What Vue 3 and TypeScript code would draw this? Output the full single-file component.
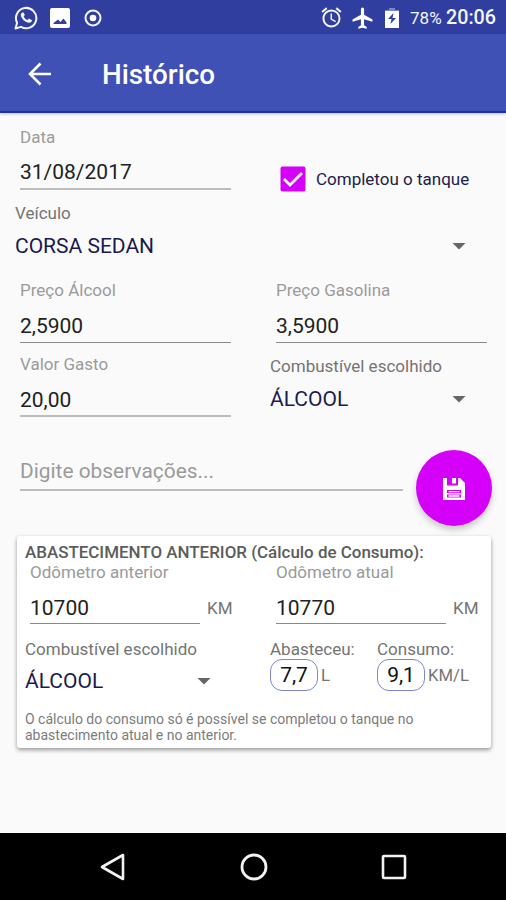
<script setup lang="ts">
interface PriceField {
  label: string
  value: string
}

const prices: PriceField[] = [
  { label: 'Preço Álcool', value: '2,5900' },
  { label: 'Preço Gasolina', value: '3,5900' },
]

const odometers: PriceField[] = [
  { label: 'Odômetro anterior', value: '10700' },
  { label: 'Odômetro atual', value: '10770' },
]
</script>

<template>
  <div class="screen">
    <header class="status">
      <div class="status-left">
        <svg class="i-whats" viewBox="0 0 24 24" width="24" height="24">
          <path d="M1.5 22.5l1.6-5.7A10.2 10.2 0 1 1 7 20.9z" fill="none" stroke="#f4f5ff" stroke-width="2" stroke-linejoin="round" />
          <path d="M8.3 6.4c-.9.5-1.6 1.5-1.4 2.9.5 3.8 4.7 7.6 8.3 7.5 1.6-.1 2.8-1.1 2.8-2.6l-3-1.6-1.5 1.5c-1.8-.8-3-2-3.8-3.7l1.1-1.3-1.2-2.7z" fill="#f4f5ff" />
        </svg>
        <svg class="i-pic" viewBox="0 0 20 20" width="20" height="20">
          <path fill-rule="evenodd" d="M2 0h16a2 2 0 0 1 2 2v16a2 2 0 0 1-2 2H2a2 2 0 0 1-2-2V2a2 2 0 0 1 2-2zM3.5 16h13v-1.500l-3-4-3 3.500-2.500-2.500-4.500 3.500z" fill="#fff" />
        </svg>
        <svg class="i-dot" viewBox="0 0 18 18" width="18" height="18">
          <circle cx="9" cy="9" r="7.500" fill="none" stroke="#f4f5ff" stroke-width="2" />
          <circle cx="9" cy="9" r="3.300" fill="#fff" />
        </svg>
      </div>
      <div class="status-right">
        <svg class="i-alarm" viewBox="1.500 1.500 21 21" width="21" height="21">
          <path d="M22 5.720l-4.600-3.860-1.290 1.530 4.600 3.860L22 5.720zM7.880 3.390L6.600 1.860 2 5.710l1.290 1.530 4.590-3.850zM12.500 8H11v6l4.750 2.850.75-1.230-4-2.370V8zM12 4c-4.970 0-9 4.030-9 9s4.020 9 9 9a9 9 0 0 0 0-18zm0 16c-3.870 0-7-3.130-7-7s3.130-7 7-7 7 3.130 7 7-3.130 7-7 7z" fill="#f4f5ff" />
        </svg>
        <svg class="i-plane" viewBox="2 1.500 20 21" width="21" height="22">
          <path d="M21.500 15.500v-2L13.500 9V3.500a1.500 1.500 0 0 0-3 0V9l-8 4.500v2l8-2.200V19l-2.500 1.700v1.600l4-1 4 1v-1.600L13.500 19v-5.700z" fill="#fff" />
        </svg>
        <svg class="i-batt" viewBox="0 0 14 20" width="14" height="20">
          <path d="M4 0h6v2h4v2H0V2h4z" fill="#7986cb" />
          <path fill-rule="evenodd" d="M0 3h14v17H0zM8.500 5L3 11h3.500l-1 5L11 10H7.500z" fill="#fff" />
        </svg>
        <span class="percent">78%</span>
        <span class="clock">20:06</span>
      </div>
    </header>

    <div class="appbar">
      <svg class="back" viewBox="0 0 24 24" width="24" height="24">
        <path d="M23 12H2.500M12.500 1.500L2 12l10.500 10.500" fill="none" stroke="#fff" stroke-width="2.600" />
      </svg>
      <h1>Histórico</h1>
    </div>

    <main>
      <div class="row first">
        <div class="field soft">
          <label>Data</label>
          <div class="value date">31/08/2017</div>
        </div>
        <div class="check">
          <svg viewBox="0 0 26 26" width="26" height="26">
            <rect x=".5" y=".5" width="25" height="25" rx="2" fill="#d500f9" />
            <path d="M4 13l6 6L22 7" fill="none" stroke="#fff" stroke-width="2.800" />
          </svg>
          <span>Completou o tanque</span>
        </div>
      </div>

      <div class="picker vehicle">
        <label>Veículo</label>
        <div class="choice"><span>CORSA SEDAN</span><i class="arrow"></i></div>
      </div>

      <div class="row prices">
        <div v-for="p in prices" :key="p.label" class="field">
          <label>{{ p.label }}</label>
          <div class="value">{{ p.value }}</div>
        </div>
      </div>

      <div class="row spent">
        <div class="field soft">
          <label>Valor Gasto</label>
          <div class="value">20,00</div>
        </div>
        <div class="picker fuel">
          <label>Combustível escolhido</label>
          <div class="choice"><span>ÁLCOOL</span><i class="arrow"></i></div>
        </div>
      </div>

      <div class="notes">
        <div class="hint">Digite observações...</div>
        <button class="fab" aria-label="Salvar">
          <svg viewBox="0 0 22 22" width="22" height="22">
            <path fill-rule="evenodd" d="M0 0h17l5 5v17H0zM4 0v7.500h11V0h-2v5.500H9V0zM4 12v7.500h14V12z" fill="#fff" />
            <path d="M5.500 13.700h11M5.500 18h11M4 15.900h14" stroke="#fff" stroke-width="1.300" />
          </svg>
        </button>
      </div>

      <section class="card">
        <h2>ABASTECIMENTO ANTERIOR (Cálculo de Consumo):</h2>
        <div class="odos">
          <div v-for="o in odometers" :key="o.label" class="odo">
            <div class="field">
              <label>{{ o.label }}</label>
              <div class="value">{{ o.value }}</div>
            </div>
            <span class="km">KM</span>
          </div>
        </div>
        <div class="results">
          <div class="picker">
            <label>Combustível escolhido</label>
            <div class="choice"><span>ÁLCOOL</span><i class="arrow"></i></div>
          </div>
          <div class="result">
            <label>Abasteceu:</label>
            <div class="measure"><b>7,7</b><span>L</span></div>
          </div>
          <div class="result">
            <label>Consumo:</label>
            <div class="measure"><b>9,1</b><span>KM/L</span></div>
          </div>
        </div>
        <p>O cálculo do consumo só é possível se completou o tanque no<br />abastecimento atual e no anterior.</p>
      </section>
    </main>

    <nav>
      <svg viewBox="0 0 28 28" width="28" height="28"><path d="M24 2v24L3 14z" fill="none" stroke="#f2f2f2" stroke-width="2.600" stroke-linejoin="round" /></svg>
      <svg viewBox="0 0 28 28" width="28" height="28"><circle cx="14" cy="14" r="12" fill="none" stroke="#f2f2f2" stroke-width="2.800" /></svg>
      <svg viewBox="0 0 28 28" width="28" height="28"><rect x="3" y="3" width="22" height="22" rx="1" fill="none" stroke="#f2f2f2" stroke-width="2.600" /></svg>
    </nav>
  </div>
</template>

<style>
body {
  margin: 0;
}
</style>

<style scoped>
* {
  box-sizing: border-box;
}
.screen {
  width: 506px;
  height: 900px;
  display: flex;
  flex-direction: column;
  background: #fafafa;
  font-family: Roboto, sans-serif;
  color: #212121;
  overflow: hidden;
  white-space: nowrap;
}
svg {
  display: block;
  flex: none;
}
.status {
  height: 34px;
  flex: none;
  background: #303f9f;
  display: flex;
  justify-content: space-between;
  color: #f4f5ff;
}
.status-left,
.status-right {
  display: flex;
  align-items: center;
  height: 35px;
}
.status-left {
  padding-left: 14px;
}
.i-pic {
  margin-left: 12px;
}
.i-dot {
  margin-left: 14px;
}
.status-right {
  padding-right: 10px;
}
.i-plane {
  margin-left: 10px;
}
.i-batt {
  margin-left: 12px;
}
.percent {
  margin-left: 11px;
  width: 36px;
  font-size: 17px;
}
.clock {
  font-size: 19.700px;
  font-weight: 500;
}
.appbar {
  height: 79px;
  flex: none;
  background: #3f51b5;
  border-bottom: 2px solid #1d32a5;
  box-shadow: 0 1px 3px rgba(0, 0, 0, 0.25);
  display: flex;
  align-items: center;
  padding: 2px 0 0 28px;
}
h1 {
  margin: 2px 0 0 50px;
  color: #fff;
  font-size: 27.800px;
  font-weight: 500;
}
main {
  flex: 1;
  padding-top: 13px;
}
.row {
  display: grid;
  grid-template-columns: 211px 211px;
  column-gap: 45px;
  padding-left: 20px;
}
.first {
  height: 64px;
}
label {
  display: block;
  line-height: 22px;
  font-size: 17px;
}
.field label {
  color: #9a9a9a;
}
.value {
  margin-top: 8px;
  height: 34px;
  line-height: 34px;
  font-size: 21px;
  border-bottom: 1px solid #8a8a8a;
}
.soft .value {
  border-bottom: 2px solid #bcbcbc;
}
.first .value {
  line-height: 32px;
}
.check {
  display: flex;
  align-items: center;
  gap: 10px;
  margin-left: 4px;
  padding-top: 40px;
  font-size: 17px;
  color: #20204a;
}
.picker label {
  color: #747474;
}
.choice {
  display: flex;
  align-items: center;
  justify-content: space-between;
  height: 34px;
  font-size: 21px;
  color: #1a1a50;
}
.arrow {
  width: 14px;
  height: 7px;
  background: #666;
  clip-path: polygon(0 0, 100% 0, 50% 100%);
}
.vehicle {
  padding-top: 12px;
  margin: 0 40px 0 15px;
}
.vehicle .choice,
.fuel .choice {
  margin-top: 5px;
}
.prices {
  padding-top: 16px;
}
.spent {
  padding-top: 10px;
}
.fuel {
  padding-top: 2px;
  margin: 0 21px 0 -6px;
}
.results .choice {
  margin-top: 4px;
}
.notes {
  height: 119px;
  display: flex;
  align-items: flex-start;
  padding: 33px 0 0 20px;
  gap: 13px;
}
.hint {
  width: 383px;
  height: 41px;
  line-height: 43px;
  color: #9a9a9a;
  border-bottom: 2px solid #bcbcbc;
  font-size: 20.900px;
}
.fab {
  width: 76px;
  height: 76px;
  border: 0;
  border-radius: 50%;
  background: #d500f9;
  box-shadow: 0 4px 6px rgba(0, 0, 0, 0.2);
  display: flex;
  align-items: center;
  justify-content: center;
  padding: 1px 0 0;
}
.card {
  margin: 0 15px 0 17px;
  height: 212px;
  border-radius: 3px;
  background: #fff;
  box-shadow: 0 2px 4px rgba(0, 0, 0, 0.4);
  padding: 6px 0 0 8px;
}
h2 {
  margin: 0;
  font-size: 16.950px;
  line-height: 20px;
  font-weight: 500;
  color: #5c5c5c;
}
.odos {
  display: grid;
  grid-template-columns: 246px auto;
  padding-left: 5px;
}
.odo {
  display: flex;
}
.odo .field {
  width: 170px;
}
.odo label {
  line-height: 20px;
}
.odo .value {
  margin-top: 9px;
  height: 33px;
}
.km {
  margin: 36px 0 0 7px;
  line-height: 20px;
  font-size: 17px;
  color: #747474;
}
.results {
  display: grid;
  grid-template-columns: 245px 107px auto;
  padding-top: 14px;
}
.results .picker {
  width: 186px;
}
.result label {
  color: #747474;
}
.measure {
  display: flex;
  align-items: center;
  gap: 3px;
  margin-top: -1px;
  font-size: 16.700px;
  color: #747474;
}
.measure b {
  width: 48px;
  height: 32px;
  border: 1.500px solid #7c87d0;
  border-radius: 12px;
  text-align: center;
  line-height: 31px;
  font-size: 21px;
  font-weight: 400;
  color: #111;
}
p {
  margin: 13px 0 0;
  line-height: 16px;
  font-size: 14px;
  color: #7c7c7c;
}
nav {
  height: 67px;
  flex: none;
  background: #000;
  display: flex;
  align-items: center;
  gap: 112.500px;
  padding-left: 99px;
}
</style>
